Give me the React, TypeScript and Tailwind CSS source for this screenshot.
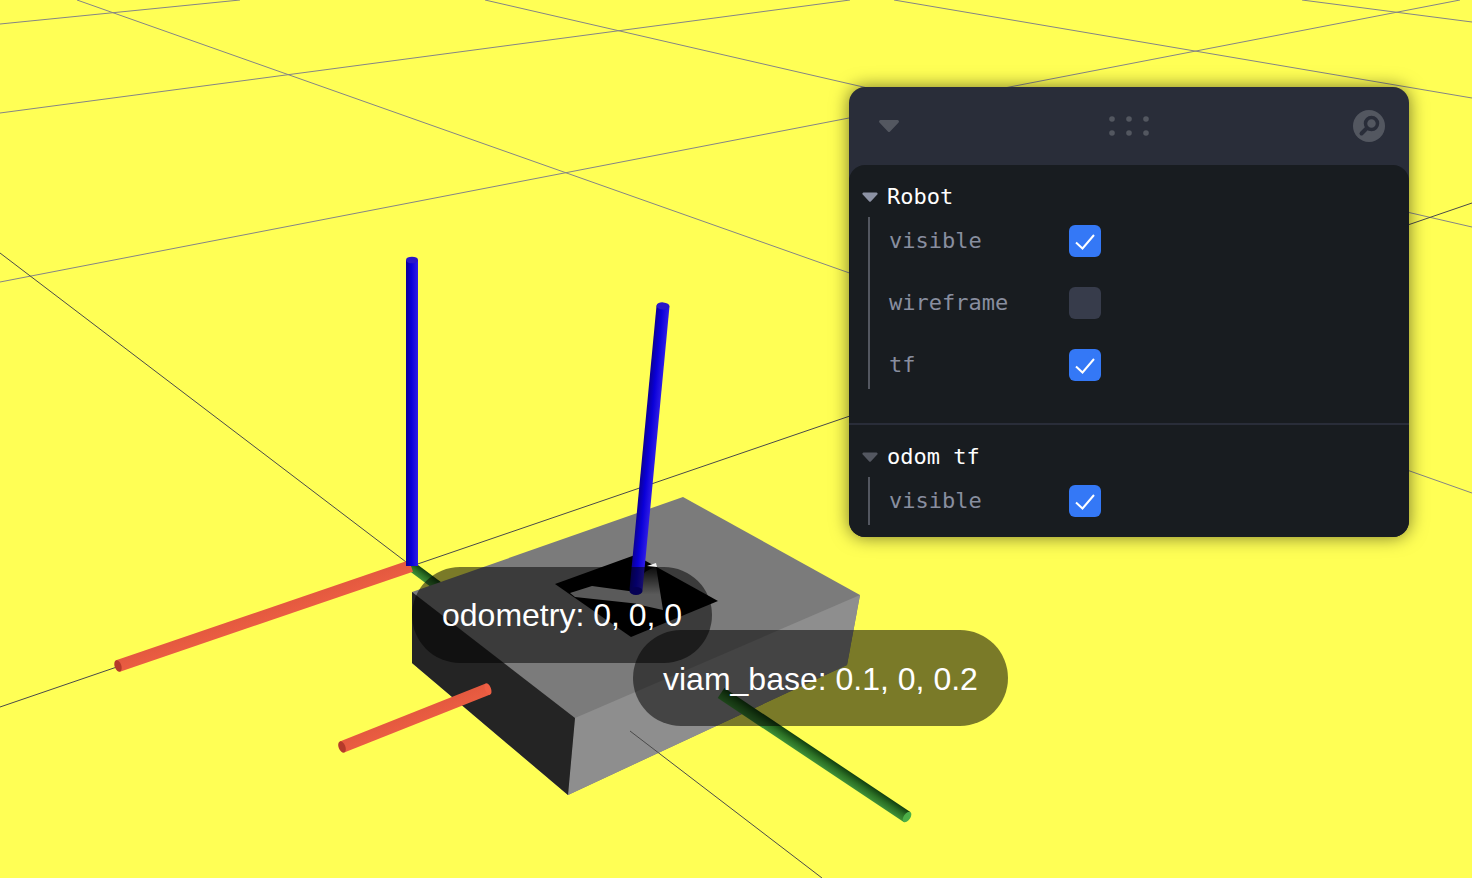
import React from "react"

type Stop = [number, string]

interface CylinderProps {
	id: string
	from: [number, number]
	to: [number, number]
	width: number
	stops: Stop[]
	cap: string
}

// one axis tube: the shade runs across the tube, the cap sits on the "to" end
const Cylinder: React.FC<CylinderProps> = ({ id, from, to, width, stops, cap }) => {
	const dx = to[0] - from[0]
	const dy = to[1] - from[1]
	const len = Math.hypot(dx, dy)
	const nx = (-dy / len) * (width / 2)
	const ny = (dx / len) * (width / 2)
	const angle = (Math.atan2(dy, dx) * 180) / Math.PI
	const points = [
		[from[0] + nx, from[1] + ny],
		[to[0] + nx, to[1] + ny],
		[to[0] - nx, to[1] - ny],
		[from[0] - nx, from[1] - ny],
	]
		.map((p) => p.join(","))
		.join(" ")

	return (
		<g>
			<defs>
				<linearGradient
					id={id}
					gradientUnits="userSpaceOnUse"
					x1={from[0] + nx}
					y1={from[1] + ny}
					x2={from[0] - nx}
					y2={from[1] - ny}
				>
					{stops.map(([offset, color]) => (
						<stop key={offset} offset={offset} stopColor={color} />
					))}
				</linearGradient>
			</defs>
			<polygon points={points} fill={`url(#${id})`} />
			<ellipse
				cx={to[0]}
				cy={to[1]}
				rx={width * 0.28}
				ry={width / 2}
				fill={cap}
				transform={`rotate(${angle} ${to[0]} ${to[1]})`}
			/>
		</g>
	)
}

const GRID_LINES: number[][] = [
	[0, 24, 240, 0],
	[0, 113, 850, 0],
	[0, 282, 1460, 0],
	[77, 0, 1472, 493],
	[485, 0, 1472, 227],
	[894, 0, 1472, 98],
	[1302, 0, 1472, 22],
]

const RED: Stop[] = [
	[0, "#e4593f"],
	[1, "#ea5d42"],
]
const BLUE: Stop[] = [
	[0, "#2f1ce6"],
	[0.55, "#0a00d8"],
	[1, "#0c0096"],
]
const GREEN: Stop[] = [
	[0, "#3f9037"],
	[0.5, "#2b6f24"],
	[1, "#124010"],
]

const Scene = () => (
	<svg className="absolute inset-0" width={1472} height={878} viewBox="0 0 1472 878">
		<defs>
			<linearGradient id="spike" x1="0" y1="0" x2="0" y2="1">
				<stop offset={0} stopColor="#111111" />
				<stop offset={0.65} stopColor="#bdbdbd" />
			</linearGradient>
		</defs>
		{GRID_LINES.map(([x1, y1, x2, y2]) => (
			<line key={`${x1}-${y1}`} x1={x1} y1={y1} x2={x2} y2={y2} stroke="#858585" strokeWidth={1} />
		))}
		{/* center lines */}
		<line x1={0} y1={707} x2={1472} y2={203} stroke="#4a4a4a" strokeWidth={1} />
		<line x1={0} y1={253} x2={410} y2={565} stroke="#4a4a4a" strokeWidth={1} />

		<Cylinder id="green-a" from={[411, 566]} to={[450, 595]} width={10} stops={GREEN} cap="#1c4f18" />

		{/* box */}
		<polygon points="683,497 860,595 847,665 568,795 412,663 412,592" fill="#7b7b7b" />
		<polygon points="575,718 860,595 847,665 568,795" fill="#8e8e8e" />
		<polygon points="412,592 575,718 568,795 412,663" fill="#242424" />
		<line x1={630} y1={731} x2={822} y2={878} stroke="#4a4a4a" strokeWidth={1} />

		{/* marker on the box */}
		<polygon points="555,584 635,555 718,601 631,637" fill="#000000" />
		<polygon points="570,593 592,586 636,592 640,604 575,597" fill="#bdbdbd" />
		<polygon points="632,592 645,572 656,566 663,610 636,604" fill="url(#spike)" />
		<polygon points="647,566 656,563 657,567" fill="#f2f2f2" />

		<Cylinder id="red-a" from={[411, 566]} to={[118, 666]} width={12} stops={RED} cap="#b53a2a" />
		<Cylinder id="red-b" from={[488, 689]} to={[342, 747]} width={12} stops={RED} cap="#b53a2a" />
		<ellipse cx={488} cy={689} rx={3} ry={6} fill="#ee5f44" transform="rotate(-21 488 689)" />

		<Cylinder id="blue-a" from={[412, 566]} to={[412, 260]} width={12} stops={BLUE} cap="#2a17c8" />
		<Cylinder id="blue-b" from={[636, 590]} to={[663, 306]} width={13} stops={BLUE} cap="#2a17c8" />
		<ellipse cx={636} cy={591} rx={6.5} ry={4} fill="#0c00b0" />

		<Cylinder id="green-b" from={[721, 693]} to={[907, 817]} width={12} stops={GREEN} cap="#4cae48" />
	</svg>
)

const Chevron = ({ className }: { className: string }) => (
	<svg className={className} width={22} height={14} viewBox="0 0 22 14">
		<path d="M2.5 1h17a1.5 1.5 0 0 1 1.1 2.5l-8.5 9a1.5 1.5 0 0 1-2.2 0l-8.5-9A1.5 1.5 0 0 1 2.5 1z" fill="currentColor" />
	</svg>
)

const SmallChevron = ({ className }: { className: string }) => (
	<svg className={className} width={16} height={10} viewBox="0 0 16 10">
		<path d="M1.6 0.5h12.8a1.2 1.2 0 0 1 .9 2L9 9.2a1.4 1.4 0 0 1-2 0L.7 2.5a1.2 1.2 0 0 1 .9-2z" fill="currentColor" />
	</svg>
)

const Checkbox = ({ checked }: { checked: boolean }) => (
	<div
		className={`flex h-8 w-8 items-center justify-center rounded-md ${checked ? "bg-[#3478f6]" : "bg-[#373c4b]"}`}
	>
		{checked && (
			<svg width={32} height={32} viewBox="0 0 32 32" fill="none">
				<path d="M7 17.5l6.5 6L25 10" stroke="#ffffff" strokeWidth={2} />
			</svg>
		)}
	</div>
)

const Row = ({ label, checked }: { label: string; checked: boolean }) => (
	<div className="flex h-12 items-center">
		<span className="w-[180px] pb-px text-[22px] text-[#888e9f]">{label}</span>
		<Checkbox checked={checked} />
	</div>
)

const FolderTitle = ({ title, chevron }: { title: string; chevron: string }) => (
	<div className="flex h-8 items-center pl-[13px]">
		<SmallChevron className={chevron} />
		<span className="ml-[9px] pb-px text-[22px] text-[#fefefe]">{title}</span>
	</div>
)

const Panel = () => (
	<div className="absolute left-[849px] top-[87px] w-[560px] rounded-2xl bg-[#292d39] font-['DejaVu_Sans_Mono',monospace] shadow-[0_0_18px_#00000088]">
		<div className="flex h-[78px] items-center justify-between pl-[29px] pr-[24px]">
			<div className="w-[27px]">
				<Chevron className="text-[#535760]" />
			</div>
			<svg width={44} height={20} viewBox="0 0 44 20" fill="#535760">
				<circle cx={5} cy={3} r={2.8} />
				<circle cx={22} cy={3} r={2.8} />
				<circle cx={39} cy={3} r={2.8} />
				<circle cx={5} cy={17} r={2.8} />
				<circle cx={22} cy={17} r={2.8} />
				<circle cx={39} cy={17} r={2.8} />
			</svg>
			<svg width={32} height={32} viewBox="0 0 32 32" fill="none">
				<circle cx={16} cy={16} r={16} fill="#535760" />
				<circle cx={18.5} cy={13.5} r={6} stroke="#292d39" strokeWidth={3.5} />
				<path d="M13.5 18.5L8.5 23.5" stroke="#292d39" strokeWidth={4} strokeLinecap="round" />
			</svg>
		</div>
		<div className="rounded-2xl bg-[#181c20]">
			<div className="border-b-2 border-[#292d39] pb-[34px] pt-4">
				<FolderTitle title="Robot" chevron="text-[#8c92a4]" />
				<div className="ml-[19px] mt-1 flex flex-col gap-[14px] border-l-2 border-[#535760] pl-[19px]">
					<Row label="visible" checked />
					<Row label="wireframe" checked={false} />
					<Row label="tf" checked />
				</div>
			</div>
			<div className="pb-3 pt-4">
				<FolderTitle title="odom tf" chevron="text-[#535760]" />
				<div className="ml-[19px] mt-1 border-l-2 border-[#535760] pl-[19px]">
					<Row label="visible" checked />
				</div>
			</div>
		</div>
	</div>
)

const Label = ({ text, className }: { text: string; className: string }) => (
	<div
		className={`absolute whitespace-nowrap rounded-full bg-black/[0.52] px-[30px] font-['Liberation_Sans',Arial,sans-serif] text-[32px] leading-[48px] text-white ${className}`}
	>
		{text}
	</div>
)

export default function App() {
	return (
		<div className="relative h-[878px] w-[1472px] overflow-hidden bg-[#ffff55]">
			<Scene />
			<Label text="odometry: 0, 0, 0" className="left-[412px] top-[567px] py-6" />
			<Label text="viam_base: 0.1, 0, 0.2" className="left-[633px] top-[630px] pb-[23px] pt-[25px]" />
			<Panel />
		</div>
	)
}
